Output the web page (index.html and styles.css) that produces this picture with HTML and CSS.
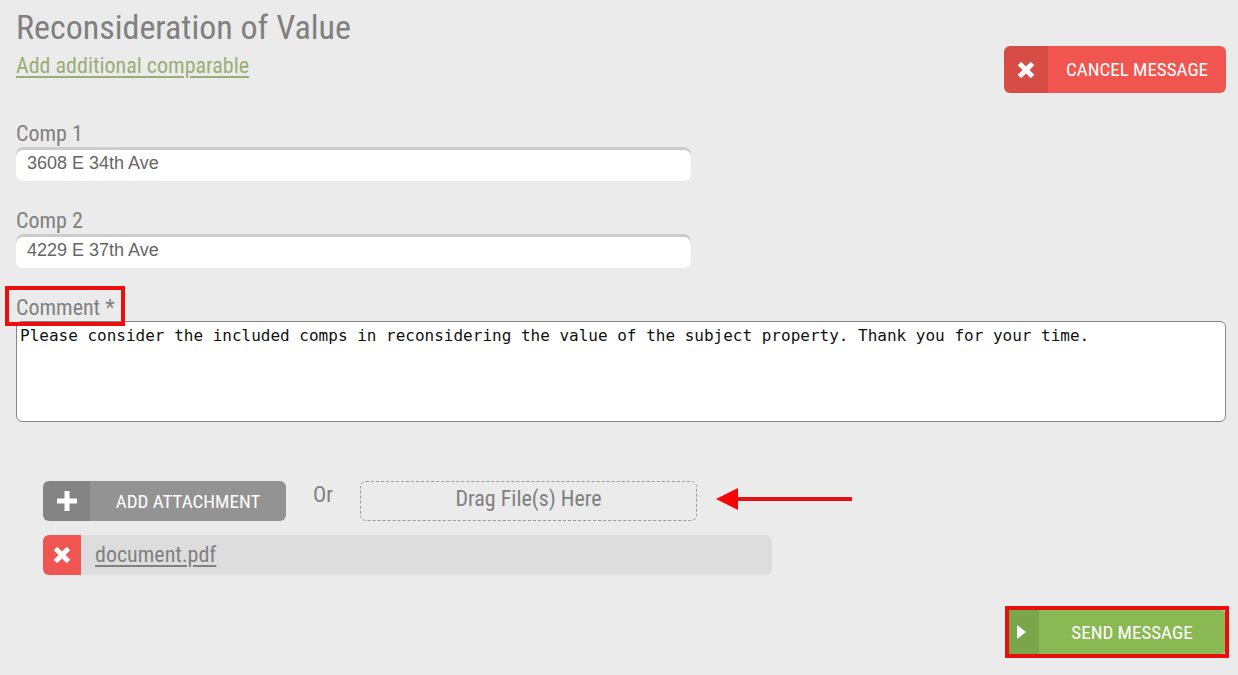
FILE: index.html
```html
<!DOCTYPE html>
<html lang="en">
<head>
    <meta charset="UTF-8">
    <meta name="viewport" content="width=device-width, initial-scale=1.0">
    <title>Reconsideration of Value</title>
    <link rel="stylesheet" href="styles.css">
</head>
<body>
    <form class="message-form">
        <!-- Header -->
        <div class="header">
            <div class="header-text">
                <h1>Reconsideration of Value</h1>
                <a class="add-link" href="#">Add additional comparable</a>
            </div>
            <button type="button" class="btn cancel-btn">
                <span class="btn-icon">
                    <svg width="18" height="18" viewBox="0 0 18 18"><path d="M2.5 2.5L15.5 15.5M15.5 2.5L2.5 15.5" stroke="#fff" stroke-width="5"/></svg>
                </span>
                <span class="btn-text">CANCEL MESSAGE</span>
            </button>
        </div>

        <!-- Comparables -->
        <div class="field">
            <label for="comp1">Comp 1</label>
            <input type="text" id="comp1" value="3608 E 34th Ave">
        </div>
        <div class="field">
            <label for="comp2">Comp 2</label>
            <input type="text" id="comp2" value="4229 E 37th Ave">
        </div>

        <!-- Comment -->
        <div class="field comment-field">
            <label for="comment" class="marked comment-label">Comment *</label>
            <textarea id="comment" spellcheck="false">Please consider the included comps in reconsidering the value of the subject property. Thank you for your time.</textarea>
        </div>

        <!-- Attachments -->
        <div class="attachments">
            <div class="attach-row">
                <button type="button" class="btn attach-btn">
                    <span class="btn-icon">
                        <svg width="20" height="20" viewBox="0 0 20 20"><path d="M10 0V20M0 10H20" stroke="#fff" stroke-width="5"/></svg>
                    </span>
                    <span class="btn-text">ADD ATTACHMENT</span>
                </button>
                <span class="or">Or</span>
                <div class="drop-zone">Drag File(s) Here</div>
                <svg class="arrow" width="136" height="22" viewBox="0 0 136 22"><path d="M20 9H136V13H20Z" fill="#e01212"/><path d="M0 11L22 0V22Z" fill="#f50505"/></svg>
            </div>
            <div class="file-row">
                <button type="button" class="remove-btn" aria-label="Remove document.pdf">
                    <svg width="18" height="18" viewBox="0 0 18 18"><path d="M2.5 2.5L15.5 15.5M15.5 2.5L2.5 15.5" stroke="#fff" stroke-width="5"/></svg>
                </button>
                <a class="file-link" href="#">document.pdf</a>
            </div>
        </div>

        <!-- Send -->
        <div class="footer">
            <div class="marked send-wrap">
                <button type="submit" class="btn send-btn">
                    <span class="btn-icon">
                        <svg width="9" height="14" viewBox="0 0 9 14"><path d="M0 0L9 7L0 14Z" fill="#fff"/></svg>
                    </span>
                    <span class="btn-text">SEND MESSAGE</span>
                </button>
            </div>
        </div>
    </form>
</body>
</html>
```
FILE: styles.css
```css
* {
    margin: 0;
    padding: 0;
    box-sizing: border-box;
}

body {
    font-family: "Roboto Condensed", Roboto, sans-serif;
    font-size: 22px;
    line-height: 26px;
    color: #808080;
    background-color: #ebebeb;
}

button {
    font-family: inherit;
    border: none;
    cursor: pointer;
}

svg {
    display: block;
}

.message-form {
    padding: 7px 12px 16px 16px;
}

/* Header */
.header {
    display: flex;
    justify-content: space-between;
    align-items: flex-end;
    margin-bottom: 28px;
}

.header-text {
    padding-bottom: 14px;
}

h1 {
    font-size: 34px;
    font-weight: 400;
    line-height: 40px;
    margin-bottom: 6px;
}

.add-link {
    display: block;
    color: #9aae74;
    text-underline-offset: 3px;
}

/* Buttons */
.btn {
    display: flex;
    color: #fff;
    font-size: 19px;
    border-radius: 6px;
    overflow: hidden;
}

.btn-icon {
    display: flex;
    align-items: center;
    justify-content: center;
    align-self: stretch;
    background-color: rgba(0, 0, 0, 0.1);
}

.btn-text {
    flex: 1;
    align-self: center;
    text-align: center;
}

.cancel-btn {
    width: 222px;
    height: 47px;
    background-color: #f0564f;
}

.cancel-btn .btn-icon {
    width: 44px;
}

/* Fields */
.field {
    display: flex;
    flex-direction: column;
    align-items: flex-start;
    margin-bottom: 27px;
}

input {
    width: 55.8%;
    height: 34px;
    padding: 0 11px 2px;
    font-family: "Liberation Sans", Arial, sans-serif;
    font-size: 18px;
    color: #666;
    background-color: #fff;
    border: none;
    border-radius: 7px;
    box-shadow: inset 0 3px 0 #ccc;
}

.comment-field {
    margin-bottom: 59px;
}

textarea {
    width: 100%;
    height: 101px;
    padding: 3px;
    font-family: Consolas, "DejaVu Sans Mono", monospace;
    font-size: 16px;
    line-height: 22px;
    color: #111;
    background-color: #fff;
    border: 1px solid #858585;
    border-radius: 6px;
    resize: none;
}

/* Red highlight boxes */
.marked {
    border: 4px solid #ea0e0e;
}

.comment-label {
    position: relative;
    z-index: 1;
    margin: -9px 0 -5px -11px;
    padding: 5px 6px 1px 7px;
}

/* Attachments */
.attachments {
    padding-left: 27px;
    margin-bottom: 31px;
}

.attach-row {
    display: flex;
    align-items: center;
    margin-bottom: 14px;
}

.attach-btn {
    width: 243px;
    height: 40px;
    background-color: #939393;
}

.attach-btn .btn-icon {
    width: 47px;
}

.or {
    width: 74px;
    padding-bottom: 12px;
    text-align: center;
}

.drop-zone {
    width: 337px;
    height: 40px;
    padding-top: 4px;
    text-align: center;
    border: 1px dashed #999;
    border-radius: 6px;
}

.arrow {
    margin: 0 0 4px 19px;
}

.file-row {
    display: flex;
    align-items: center;
    width: 61.6%;
    height: 40px;
    background-color: #ddd;
    border-radius: 6px;
    overflow: hidden;
}

.remove-btn {
    display: flex;
    align-items: center;
    justify-content: center;
    width: 38px;
    height: 40px;
    background-color: #ef5651;
}

.file-link {
    margin-left: 14px;
    color: #808080;
    text-underline-offset: 3px;
}

/* Send */
.footer {
    display: flex;
    justify-content: flex-end;
    margin-right: -3px;
}

.send-btn {
    width: 216px;
    height: 44px;
    border-radius: 0 4px 4px 0;
    background-color: #8ab853;
}

.send-btn .btn-icon {
    width: 30px;
    padding-right: 6px;
}
```
